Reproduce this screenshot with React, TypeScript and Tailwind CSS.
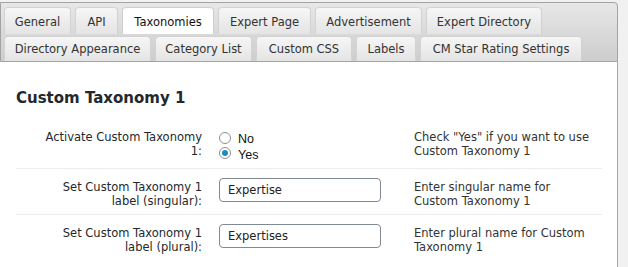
import React from "react";

const row1: [string, string][] = [
  ["General", "w-[67px]"],
  ["API", "w-[43px]"],
  ["Taxonomies", "w-[92px]"],
  ["Expert Page", "w-[93px]"],
  ["Advertisement", "w-[107px]"],
  ["Expert Directory", "w-[116px]"],
];
const row2: [string, string][] = [
  ["Directory Appearance", "w-[147px]"],
  ["Category List", "w-[97px]"],
  ["Custom CSS", "w-[96px]"],
  ["Labels", "w-[60px]"],
  ["CM Star Rating Settings", "w-[162px]"],
];

function Tab({ label, active, cls }: { label: string; active?: boolean; cls: string }) {
  return (
    <div
      className={`${cls} flex items-center justify-center border border-b-0 rounded-t-[4px] whitespace-nowrap ${
        active
          ? "bg-white border-[#cfcfcf] text-[#111]"
          : "bg-gradient-to-b from-[#f6f6f6] to-[#e4e4e4] border-[#d2d2d2] text-[#333]"
      }`}
    >
      {label}
    </div>
  );
}

function Radio({ checked, label }: { checked?: boolean; label: string }) {
  return (
    <div className="h-[15.5px] flex items-center">
      <span className="w-[12px] h-[12px] rounded-full border border-[#8c8f94] bg-white flex items-center justify-center shrink-0">
        {checked && <span className="w-[6px] h-[6px] rounded-full bg-[#1e8cbe]" />}
      </span>
      <span className="ml-[7px] text-[12.5px] text-[#111] pt-[3px]" style={{ fontFamily: '"Liberation Sans", Arial, sans-serif' }}>
        {label}
      </span>
    </div>
  );
}

export default function App() {
  return (
    <div
      className="w-[628px] h-[267px] bg-[#f1f1f1] overflow-hidden text-[11.5px] leading-[14px] text-[#23282d]"
      style={{ fontFamily: '"DejaVu Sans", Verdana, sans-serif' }}
    >
      <div className="mt-[2px] w-[618px] h-[265px] flex flex-col">
        {/* tab nav */}
        <div className="border border-[#a3a3a3] rounded-tr-[4px] bg-gradient-to-b from-[#e7e7e7] to-[#cdcdcd] pt-[4px] pl-[3px] flex flex-col gap-[2px]">
          <div className="flex gap-[4px]">
            {row1.map(([t, w]) => (
              <Tab key={t} label={t} active={t === "Taxonomies"} cls={`${w} h-[27px] pt-[2px]`} />
            ))}
          </div>
          <div className="flex gap-[4px]">
            {row2.map(([t, w]) => (
              <Tab key={t} label={t} cls={`${w} h-[25px]`} />
            ))}
          </div>
        </div>
        {/* content */}
        <div className="flex-1 bg-white border-r border-[#a8a8a8] px-[16px] pr-[15px]">
          <h2 className="pt-[26px] text-[15px] leading-[20px] font-bold text-[#23282d]">Custom Taxonomy 1</h2>

          <div className="grid grid-cols-[194px_204px_1fr] pt-[22px] pb-[7px] border-b border-[#ececec]">
            <div className="text-right pr-[8px]">
              Activate Custom Taxonomy
              <br />
              1:
            </div>
            <div className="pl-[9px]">
              <Radio label="No" />
              <Radio label="Yes" checked />
            </div>
            <div className="text-[#333]">
              Check "Yes" if you want to use
              <br />
              Custom Taxonomy 1
            </div>
          </div>

          <div className="grid grid-cols-[194px_204px_1fr] pt-[11px] pb-[6px] border-b border-[#ececec]">
            <div className="text-right pr-[8px]">
              Set Custom Taxonomy 1
              <br />
              label (singular):
            </div>
            <div className="pl-[9px]">
              <div className="-mt-[2px] w-[162px] h-[24px] border border-[#7e8993] rounded-[4px] flex items-center pl-[8px] text-[11.5px] text-[#222]">
                Expertise
              </div>
            </div>
            <div className="text-[#333]">
              Enter singular name for
              <br />
              Custom Taxonomy 1
            </div>
          </div>

          <div className="grid grid-cols-[194px_204px_1fr] pt-[11px] pb-[6px]">
            <div className="text-right pr-[8px]">
              Set Custom Taxonomy 1
              <br />
              label (plural):
            </div>
            <div className="pl-[9px]">
              <div className="-mt-[2px] w-[162px] h-[24px] border border-[#7e8993] rounded-[4px] flex items-center pl-[8px] text-[11.5px] text-[#222]">
                Expertises
              </div>
            </div>
            <div className="text-[#333]">
              Enter plural name for Custom
              <br />
              Taxonomy 1
            </div>
          </div>
        </div>
      </div>
    </div>
  );
}
